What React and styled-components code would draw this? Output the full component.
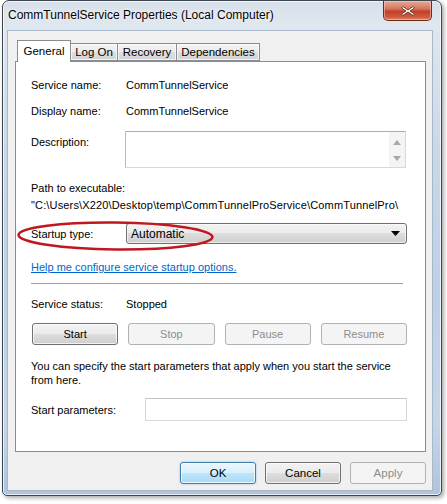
import React from "react";
import styled, { createGlobalStyle } from "styled-components";

const GlobalStyle = createGlobalStyle`
  html, body {
    margin: 0;
    padding: 0;
    background: #ffffff;
  }
  body {
    font-family: "Liberation Sans", Arial, sans-serif;
    font-size: 11px;
    color: #000;
  }
`;

const TABS = [
  { label: "General", width: 54, active: true },
  { label: "Log On", width: 48 },
  { label: "Recovery", width: 60 },
  { label: "Dependencies", width: 84 },
];

const CONTROL_BUTTONS = [
  { label: "Start", enabled: true },
  { label: "Stop" },
  { label: "Pause" },
  { label: "Resume" },
];

export default function App() {
  return (
    <>
      <GlobalStyle />
      <Screen>
        <Window>
          <TitleBar>
            <Title>CommTunnelService Properties (Local Computer)</Title>
            <CloseButton>
              <svg width="18" height="12" viewBox="0 0 18 12">
                <path
                  d="M4 1.5 L9 5 L14 1.5 L15.5 3 L11 6 L15.5 9 L14 10.5 L9 7 L4 10.5 L2.5 9 L7 6 L2.5 3 Z"
                  fill="#ffffff"
                  stroke="#5a1a10"
                  strokeWidth="0.8"
                  strokeLinejoin="round"
                />
              </svg>
            </CloseButton>
          </TitleBar>

          <Client>
            <TabStrip>
              {TABS.map((tab) => (
                <Tab key={tab.label} $active={tab.active} $width={tab.width}>
                  {tab.label}
                </Tab>
              ))}
            </TabStrip>

            <Panel>
              <InfoRow $top={15}>
                <Label>Service name:</Label>
                <Value>CommTunnelService</Value>
              </InfoRow>
              <InfoRow $top={10}>
                <Label>Display name:</Label>
                <Value>CommTunnelService</Value>
              </InfoRow>

              <DescriptionRow>
                <Label>Description:</Label>
                <TextArea>
                  <ScrollTrack>
                    <svg width="8" height="5" viewBox="0 0 8 5">
                      <path d="M4 0 L8 5 L0 5 Z" fill="#a8a8a8" />
                    </svg>
                    <svg width="8" height="5" viewBox="0 0 8 5">
                      <path d="M0 0 L8 0 L4 5 Z" fill="#a8a8a8" />
                    </svg>
                  </ScrollTrack>
                </TextArea>
              </DescriptionRow>

              <Line $top={12}>Path to executable:</Line>
              <PathLine>
                "C:\Users\X220\Desktop\temp\CommTunnelProService\CommTunnelPro\
              </PathLine>

              <StartupRow>
                <Label>Startup type:</Label>
                <ComboBox>
                  <span>Automatic</span>
                  <svg width="9" height="5" viewBox="0 0 9 5">
                    <path d="M0 0 L9 0 L4.5 5 Z" fill="#000" />
                  </svg>
                </ComboBox>
              </StartupRow>

              <HelpLink href="#">Help me configure service startup options.</HelpLink>

              <Separator />

              <InfoRow $top={12}>
                <Label>Service status:</Label>
                <Value>Stopped</Value>
              </InfoRow>

              <ButtonGrid>
                {CONTROL_BUTTONS.map((b) => (
                  <PushButton key={b.label} $enabled={b.enabled}>
                    {b.label}
                  </PushButton>
                ))}
              </ButtonGrid>

              <Paragraph>
                You can specify the start parameters that apply when you start the service
                from here.
              </Paragraph>

              <ParamsRow>
                <Label>Start parameters:</Label>
                <TextInput />
              </ParamsRow>

              <Annotation width="412" height="391" viewBox="0 0 412 391">
                <ellipse
                  cx="100.5"
                  cy="175"
                  rx="97"
                  ry="13.5"
                  fill="none"
                  stroke="#c01820"
                  strokeWidth="2.5"
                  transform="rotate(0.6 100.5 175)"
                />
              </Annotation>
            </Panel>

            <DialogButtons>
              <DialogButton $variant="default">OK</DialogButton>
              <DialogButton>Cancel</DialogButton>
              <DialogButton $variant="disabled">Apply</DialogButton>
            </DialogButtons>
          </Client>
        </Window>
      </Screen>
    </>
  );
}

const Screen = styled.div`
  width: 447px;
  height: 504px;
  padding-left: 2px;
  box-sizing: border-box;
  overflow: hidden;
`;

const Window = styled.div`
  width: 440px;
  box-sizing: border-box;
  border: 1px solid #3c4650;
  border-radius: 7px 7px 5px 5px;
  padding: 0 8px 4px 5px;
  background: linear-gradient(
    180deg,
    #d7e0ea 0%,
    #dfe7ef 5%,
    #c9d8e8 30%,
    #bcd0e6 60%,
    #c6d6e8 85%,
    #aec4dc 100%
  );
  box-shadow: inset 0 0 0 1px rgba(255, 255, 255, 0.7), 2px 2px 4px rgba(0, 0, 0, 0.35);
`;

const TitleBar = styled.div`
  height: 29px;
  display: flex;
  justify-content: space-between;
  align-items: flex-start;
`;

const Title = styled.div`
  margin-top: 7px;
  font-size: 12px;
  color: #000;
  text-shadow: 0 0 6px rgba(255, 255, 255, 0.9), 0 0 2px rgba(255, 255, 255, 0.9);
  white-space: nowrap;
`;

const CloseButton = styled.div`
  width: 49px;
  height: 20px;
  margin-right: 1px;
  box-sizing: border-box;
  display: flex;
  align-items: center;
  justify-content: center;
  border: 1px solid #6e2a1f;
  border-top: none;
  border-radius: 0 0 5px 5px;
  background: linear-gradient(180deg, #e9a898 0%, #d8775f 40%, #c2412a 55%, #cf5a3f 85%, #e28a68 100%);
  box-shadow: inset 0 0 0 1px rgba(255, 210, 200, 0.5);
`;

const Client = styled.div`
  height: 461px;
  box-sizing: border-box;
  padding: 9px 6px 0 7px;
  background: #f0f0f0;
  border: 1px solid #a9b8c8;
  margin-left: -1px;
  display: flex;
  flex-direction: column;
`;

const TabStrip = styled.div`
  display: flex;
  align-items: flex-end;
  height: 21px;
  padding-left: 2px;
  position: relative;
  z-index: 1;
`;

const Tab = styled.div`
  width: ${(p) => p.$width}px;
  box-sizing: border-box;
  height: ${(p) => (p.$active ? 22 : 18)}px;
  margin-bottom: ${(p) => (p.$active ? -1 : 0)}px;
  display: flex;
  align-items: center;
  justify-content: center;
  padding-bottom: ${(p) => (p.$active ? 2 : 0)}px;
  border: 1px solid #898c95;
  border-bottom: ${(p) => (p.$active ? "none" : "1px solid #898c95")};
  margin-left: ${(p) => (p.$active ? 0 : -1)}px;
  background: ${(p) =>
    p.$active
      ? "#ffffff"
      : "linear-gradient(180deg, #f3f3f3 0%, #ebebeb 50%, #dedede 50%, #d4d4d4 100%)"};
  box-shadow: ${(p) => (p.$active ? "none" : "inset 0 0 0 1px rgba(255,255,255,0.7)")};
  font-size: 11.5px;
  white-space: nowrap;
`;

const Panel = styled.div`
  position: relative;
  height: 391px;
  box-sizing: border-box;
  border: 1px solid #898c95;
  background: #ffffff;
  padding: 0 18px 0 15px;
  display: flex;
  flex-direction: column;
`;

const InfoRow = styled.div`
  display: flex;
  align-items: center;
  height: 16px;
  margin-top: ${(p) => p.$top}px;
`;

const Label = styled.div`
  width: 95px;
  flex-shrink: 0;
  white-space: nowrap;
`;

const Value = styled.div`
  white-space: nowrap;
`;

const DescriptionRow = styled.div`
  display: flex;
  margin-top: 12px;
  ${Label} {
    width: 94px;
    padding-top: 5px;
  }
`;

const TextArea = styled.div`
  width: 281px;
  height: 37px;
  box-sizing: border-box;
  border: 1px solid #d5d8dd;
  border-top-color: #abadb3;
  border-left-color: #b8bbc1;
  background: #fff;
  display: flex;
  justify-content: flex-end;
`;

const ScrollTrack = styled.div`
  width: 16px;
  background: #f4f4f4;
  display: flex;
  flex-direction: column;
  align-items: center;
  justify-content: space-between;
  padding: 8px 0 6px;
  box-sizing: border-box;
`;

const Line = styled.div`
  height: 16px;
  line-height: 16px;
  margin-top: ${(p) => p.$top}px;
`;

const PathLine = styled.div`
  height: 16px;
  line-height: 16px;
  margin-top: 1px;
  width: 376px;
  overflow: hidden;
  white-space: nowrap;
  letter-spacing: 0.15px;
`;

const StartupRow = styled.div`
  display: flex;
  align-items: center;
  margin-top: 10px;
`;

const ComboBox = styled.div`
  width: 281px;
  height: 21px;
  box-sizing: border-box;
  border: 1px solid #707070;
  border-radius: 3px;
  background: linear-gradient(180deg, #f2f2f2 0%, #ebebeb 50%, #dddddd 50%, #cfcfcf 100%);
  box-shadow: inset 0 0 0 1px rgba(255, 255, 255, 0.6);
  display: flex;
  align-items: center;
  justify-content: space-between;
  padding: 0 6px 0 4px;
  font-size: 12px;
`;

const HelpLink = styled.a`
  display: block;
  margin-top: 15px;
  height: 16px;
  line-height: 16px;
  color: #0066cc;
  text-decoration: underline;
  white-space: nowrap;
  align-self: flex-start;
`;

const Separator = styled.div`
  margin-top: 8px;
  width: 372px;
  border-top: 1px solid #a0a0a0;
`;

const ButtonGrid = styled.div`
  display: grid;
  grid-template-columns: repeat(4, 1fr);
  gap: 10px;
  margin-top: 11px;
  padding-left: 1px;
`;

const PushButton = styled.div`
  height: 22px;
  box-sizing: border-box;
  border-radius: 3px;
  display: flex;
  align-items: center;
  justify-content: center;
  border: 1px solid ${(p) => (p.$enabled ? "#707070" : "#adb2b5")};
  background: ${(p) =>
    p.$enabled
      ? "linear-gradient(180deg, #f2f2f2 0%, #ebebeb 50%, #dddddd 50%, #cfcfcf 100%)"
      : "#f4f4f4"};
  box-shadow: ${(p) => (p.$enabled ? "inset 0 0 0 1px rgba(255,255,255,0.7)" : "none")};
  color: ${(p) => (p.$enabled ? "#000" : "#8d8d8d")};
`;

const Paragraph = styled.p`
  margin: 14px 0 0;
  line-height: 14px;
`;

const ParamsRow = styled.div`
  display: flex;
  align-items: center;
  margin-top: 11px;
  ${Label} {
    width: 114px;
  }
`;

const TextInput = styled.div`
  width: 262px;
  height: 23px;
  box-sizing: border-box;
  border: 1px solid #d5d8dd;
  border-top-color: #c0c3c8;
  background: #fff;
`;

const Annotation = styled.svg`
  position: absolute;
  left: -1px;
  top: -1px;
  pointer-events: none;
`;

const DialogButtons = styled.div`
  display: flex;
  justify-content: flex-end;
  gap: 9px;
  margin-top: 10px;
`;

const DialogButton = styled.div`
  width: 76px;
  height: 22px;
  box-sizing: border-box;
  border-radius: 3px;
  display: flex;
  align-items: center;
  justify-content: center;
  font-size: 11.5px;
  border: 1px solid
    ${(p) =>
      p.$variant === "default" ? "#3c7fb1" : p.$variant === "disabled" ? "#adb2b5" : "#707070"};
  background: ${(p) =>
    p.$variant === "default"
      ? "linear-gradient(180deg, #eaf6fd 0%, #d9f0fc 50%, #bee6fd 50%, #a7d9f5 100%)"
      : p.$variant === "disabled"
      ? "#f4f4f4"
      : "linear-gradient(180deg, #f2f2f2 0%, #ebebeb 50%, #dddddd 50%, #cfcfcf 100%)"};
  box-shadow: ${(p) =>
    p.$variant === "disabled"
      ? "none"
      : p.$variant === "default"
      ? "inset 0 0 0 1px rgba(255,255,255,0.8), 0 0 2px rgba(60,150,220,0.6)"
      : "inset 0 0 0 1px rgba(255,255,255,0.7)"};
  color: ${(p) => (p.$variant === "disabled" ? "#8d8d8d" : "#000")};
`;
